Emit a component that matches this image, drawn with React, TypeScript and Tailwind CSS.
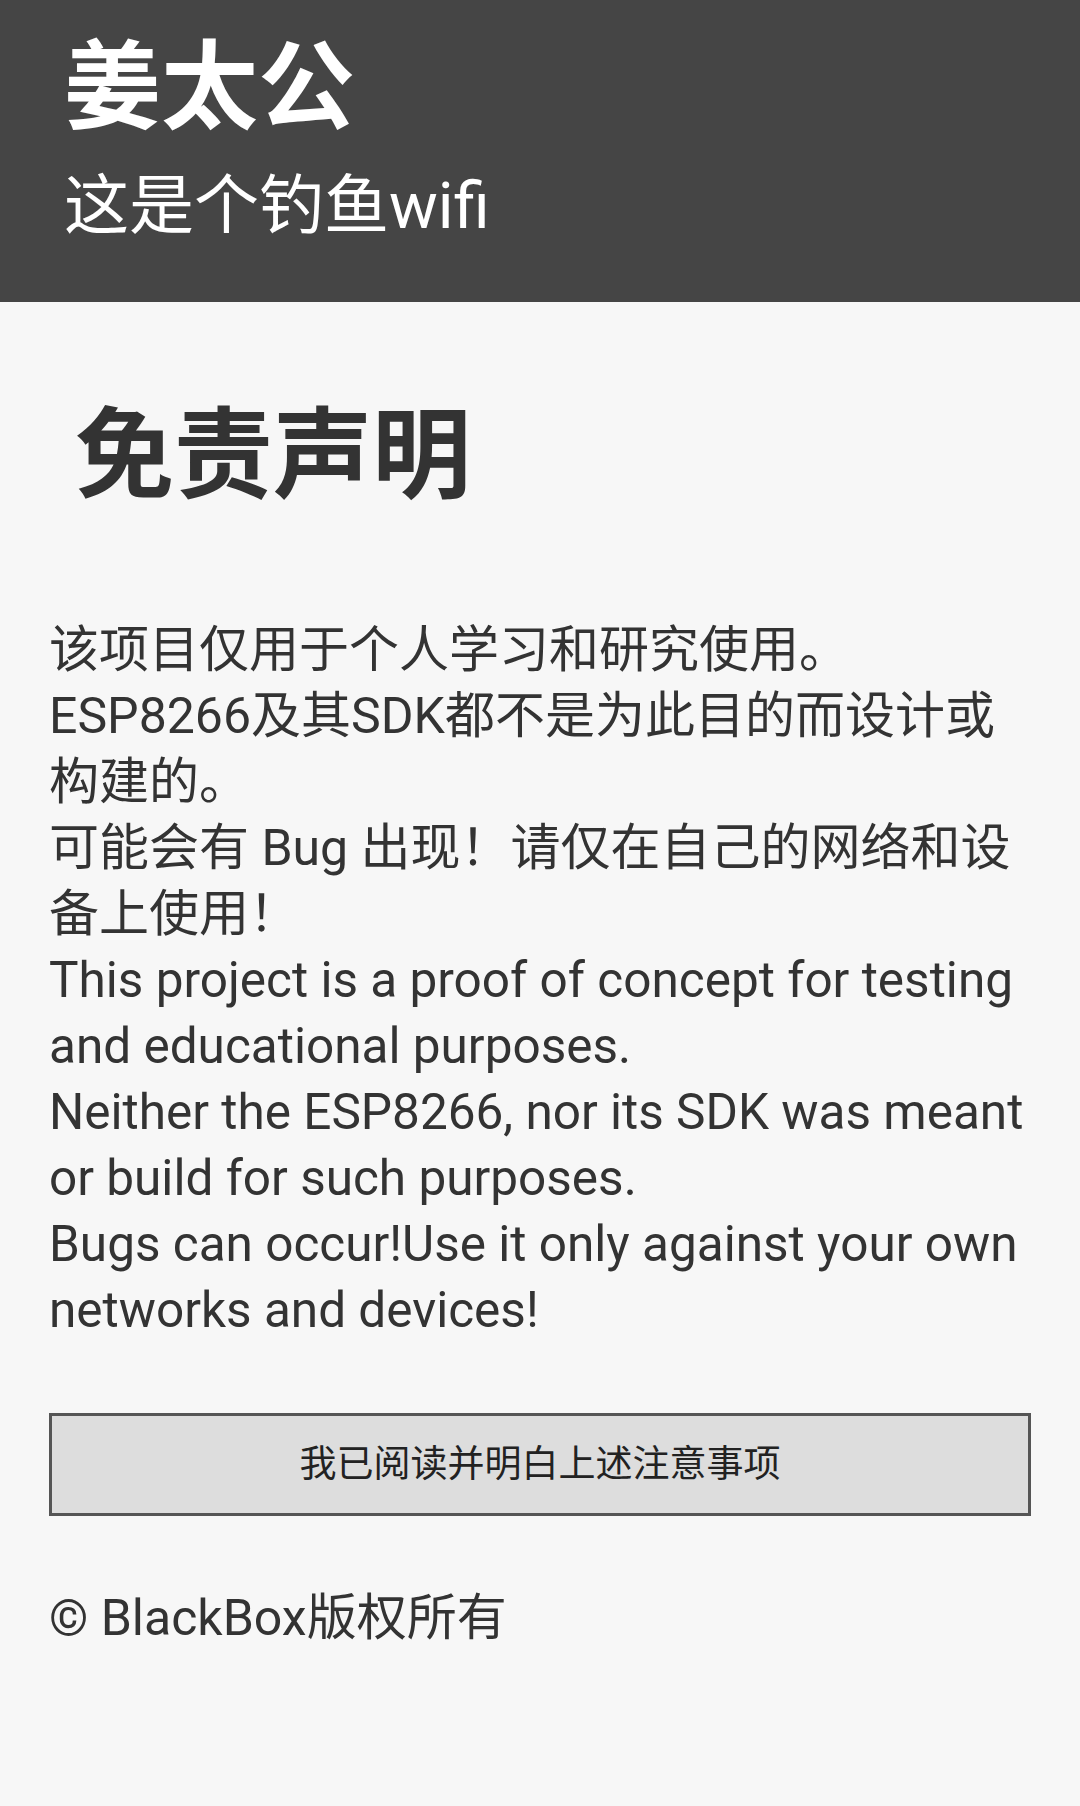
const font = "font-['Roboto','Noto_Sans_CJK_SC',sans-serif]";

const App = () => {
  return (
    <div className={`min-h-[1806px] bg-[#f7f7f7] text-[#333333] ${font}`}>
      <div className="h-[302px] bg-[#454545] pl-[64px] pt-[40px] text-white">
        <p className="text-[97px] font-bold leading-[96px]">姜太公</p>
        <p className="mt-[30px] text-[65px] leading-[80px]">这是个钓鱼wifi</p>
      </div>

      <div className="px-[49px]">
        <h1 className="mt-[106px] pl-[26px] text-[99px] font-bold leading-[96px]">
          免责声明
        </h1>

        <p className="mt-[113px] text-[50px] leading-[66px]">
          该项目仅用于个人学习和研究使用。
          <br />
          ESP8266及其SDK都不是为此目的而设计或构建的。
          <br />
          可能会有 Bug 出现！请仅在自己的网络和设备上使用！
          <br />
          <span className="text-[49.5px]">
            This project is a proof of concept for testing and educational
            purposes.
            <br />
            Neither the ESP8266, nor its SDK was meant or build for such
            purposes.
            <br />
            Bugs can occur!Use it only against your own networks and devices!
          </span>
        </p>

        <button className="mt-[70px] flex h-[103px] w-full items-center justify-center border-[3px] border-[#555555] bg-[#dddddd] text-[37px] text-[#222222]">
          我已阅读并明白上述注意事项
        </button>

        <p className="mt-[69px] text-[50px] leading-[66px]">© BlackBox版权所有</p>
      </div>
    </div>
  );
};

export default App;
